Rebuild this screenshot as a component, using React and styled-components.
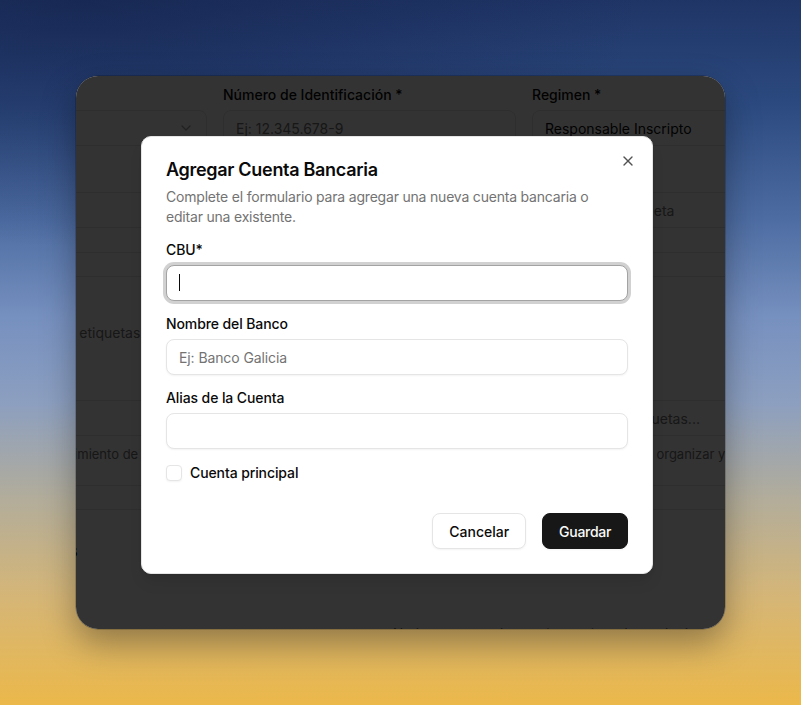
import React from "react";
import styled, { createGlobalStyle } from "styled-components";
import { X, ChevronDown } from "lucide-react";

const GlobalStyle = createGlobalStyle`
  * { box-sizing: border-box; }
  html, body { margin: 0; padding: 0; width: 801px; height: 705px; overflow: hidden; }
  body { font-family: Inter, "Noto Sans", sans-serif; -webkit-font-smoothing: antialiased; color: #0a0a0a; }
`;

const Desktop = styled.div`
  width: 801px;
  height: 705px;
  padding: 76px;
  display: flex;
  background:
    radial-gradient(ellipse 70% 35% at 10% 0%, rgba(18, 30, 70, 0.55), rgba(18, 30, 70, 0) 100%),
    linear-gradient(180deg, #1f3566 0%, #2c4a80 15%, #4d6ca2 31%, #7690bf 45%, #8c9fc0 57%, #b3ad9a 71%, #d6b676 85%, #ebb84a 100%);
`;

const AppWindow = styled.div`
  position: relative;
  flex: 1;
  border-radius: 22px;
  overflow: hidden;
  background: #ffffff;
  box-shadow: 0 14px 34px rgba(0, 0, 0, 0.35), 0 0 0 0.5px rgba(0, 0, 0, 0.35);
`;

/* ---------- background page (dimmed by overlay) ---------- */

const BgPage = styled.div`
  display: flex;
  flex-direction: column;
  margin-left: -162px;
  padding-top: 12px;
  font-size: 14px;
  color: #0a0a0a;
`;

const BgRow = styled.div`
  display: grid;
  grid-template-columns: repeat(3, 293px);
  column-gap: 16px;
  margin-top: ${(p) => p.$top || 0}px;
`;

const BgField = styled.div`
  display: grid;
  gap: 8px;
`;

const BgLabel = styled.div`
  font-weight: 500;
  line-height: 14px;
  height: 14px;
  white-space: nowrap;
`;

const BgInput = styled.div`
  height: 36px;
  border: 1px solid #e5e5e5;
  border-radius: 8px;
  padding: 0 12px;
  display: flex;
  align-items: center;
  justify-content: space-between;
  color: ${(p) => (p.$placeholder ? "#737373" : "#0a0a0a")};
  white-space: nowrap;
  overflow: hidden;
  svg { color: #a3a3a3; }
`;

const BgBar = styled.div`
  grid-column: 1 / -1;
  height: 25px;
  border-top: 1px solid #e5e5e5;
  border-bottom: 1px solid #e5e5e5;
`;

const BgText = styled.div`
  line-height: 20px;
  padding-left: 4px;
  color: #737373;
  white-space: nowrap;
`;

const BgHelper = styled.div`
  font-size: 13px;
  line-height: 18px;
  color: #737373;
  white-space: nowrap;
  overflow: hidden;
`;

const BgHeading = styled.div`
  font-size: 18px;
  line-height: 28px;
  font-weight: 600;
  white-space: nowrap;
`;

const BgEmpty = styled.div`
  grid-column: 2 / 4;
  text-align: center;
  color: #737373;
  line-height: 20px;
  padding-left: 40px;
  white-space: nowrap;
`;

/* ---------- dialog ---------- */

const Overlay = styled.div`
  position: absolute;
  inset: 0;
  background: rgba(0, 0, 0, 0.8);
  display: flex;
  align-items: flex-start;
  justify-content: flex-start;
  padding: 60px 0 0 65px;
`;

const Dialog = styled.div`
  position: relative;
  width: 512px;
  background: #ffffff;
  border: 1px solid #e5e5e5;
  border-radius: 10px;
  padding: 24px;
  display: grid;
  gap: 16px;
  box-shadow: 0 10px 15px -3px rgba(0, 0, 0, 0.1), 0 4px 6px -4px rgba(0, 0, 0, 0.1);
`;

const CloseButton = styled.button`
  position: absolute;
  top: 16px;
  right: 16px;
  width: 16px;
  height: 16px;
  padding: 0;
  border: 0;
  background: transparent;
  color: #0a0a0a;
  opacity: 0.7;
  display: flex;
  cursor: pointer;
`;

const Header = styled.div`
  display: flex;
  flex-direction: column;
  gap: 8px;
`;

const Title = styled.h2`
  margin: 0;
  font-size: 18px;
  line-height: 18px;
  font-weight: 600;
  letter-spacing: -0.3px;
`;

const Description = styled.p`
  margin: 0;
  font-size: 14px;
  line-height: 20px;
  color: #737373;
  letter-spacing: -0.2px;
`;

const Form = styled.div`
  display: grid;
  gap: 16px;
`;

const Field = styled.div`
  display: grid;
  gap: 8px;
`;

const Label = styled.label`
  font-size: 14px;
  line-height: 14px;
  font-weight: 500;
  letter-spacing: -0.1px;
`;

const Control = styled.div`
  position: relative;
`;

const Input = styled.input`
  display: block;
  width: 100%;
  height: 36px;
  padding: 0 12px;
  border-radius: 8px;
  border: 1px solid ${(p) => (p.$focused ? "#a3a3a3" : "#e5e5e5")};
  box-shadow: ${(p) =>
    p.$focused ? "0 0 0 3px rgba(163, 163, 163, 0.5)" : "0 1px 2px rgba(0, 0, 0, 0.05)"};
  font-family: inherit;
  font-size: 14px;
  letter-spacing: -0.1px;
  color: #0a0a0a;
  background: #ffffff;
  outline: none;
  caret-color: transparent;
  &::placeholder { color: #737373; }
`;

const Caret = styled.span`
  position: absolute;
  left: 13px;
  top: 9px;
  width: 1px;
  height: 17px;
  background: #0a0a0a;
`;

const CheckRow = styled.div`
  display: flex;
  align-items: center;
  gap: 8px;
  height: 16px;
`;

const CheckBox = styled.span`
  width: 16px;
  height: 16px;
  border: 1px solid #e5e5e5;
  border-radius: 4px;
  box-shadow: 0 1px 2px rgba(0, 0, 0, 0.05);
  background: #fff;
`;

const CheckLabel = styled.span`
  font-size: 14px;
  line-height: 14px;
  font-weight: 500;
  letter-spacing: -0.1px;
`;

const Footer = styled.div`
  display: flex;
  justify-content: flex-end;
  gap: 16px;
  margin-top: 16px;
`;

const Button = styled.button`
  height: 36px;
  padding: 0 16px;
  border-radius: 8px;
  font-family: inherit;
  font-size: 14px;
  font-weight: 500;
  letter-spacing: ${(p) => (p.$primary ? "-0.3px" : "0")};
  cursor: pointer;
  border: 1px solid ${(p) => (p.$primary ? "#171717" : "#e5e5e5")};
  background: ${(p) => (p.$primary ? "#171717" : "#ffffff")};
  color: ${(p) => (p.$primary ? "#fafafa" : "#0a0a0a")};
  box-shadow: 0 1px 2px rgba(0, 0, 0, 0.05);
`;

export default function App() {
  return (
    <>
      <GlobalStyle />
      <Desktop>
        <AppWindow>
          <BgPage>
            <BgRow>
              <BgField>
                <BgLabel>Tipo de Documento *</BgLabel>
                <BgInput>
                  <span>CUIT</span>
                  <ChevronDown size={16} />
                </BgInput>
              </BgField>
              <BgField>
                <BgLabel>Número de Identificación *</BgLabel>
                <BgInput $placeholder>Ej: 12.345.678-9</BgInput>
              </BgField>
              <BgField>
                <BgLabel>Regimen *</BgLabel>
                <BgInput>Responsable Inscripto</BgInput>
              </BgField>
            </BgRow>
            <BgRow $top={24}>
              <BgField>
                <BgLabel>Condición</BgLabel>
                <BgInput />
              </BgField>
              <BgField>
                <BgLabel>Email</BgLabel>
                <BgInput />
              </BgField>
              <BgField>
                <BgLabel>Etiqueta</BgLabel>
                <BgInput $placeholder>Escoja una etiqueta</BgInput>
              </BgField>
            </BgRow>
            <BgRow $top={24}>
              <BgBar />
            </BgRow>
            <BgRow $top={46}>
              <BgText>Organiza contactos con etiquetas</BgText>
            </BgRow>
            <BgRow $top={35}>
              <BgField>
                <BgLabel>Seguimiento</BgLabel>
                <BgInput />
              </BgField>
              <BgField>
                <BgLabel>Notas</BgLabel>
                <BgInput />
              </BgField>
              <BgField>
                <BgLabel>Etiquetas</BgLabel>
                <BgInput $placeholder>Seleccionar etiquetas...</BgInput>
              </BgField>
            </BgRow>
            <BgRow $top={9}>
              <BgHelper>Permite rehabilitar el seguimiento de pagos</BgHelper>
              <div />
              <BgHelper>Crea etiquetas para organizar y filtrar</BgHelper>
            </BgRow>
            <BgRow $top={22}>
              <BgBar />
            </BgRow>
            <BgRow $top={27}>
              <BgHeading>Cuentas Bancarias</BgHeading>
            </BgRow>
            <BgRow $top={59}>
              <BgEmpty>No hay cuentas bancarias registradas todavía</BgEmpty>
            </BgRow>
          </BgPage>

          <Overlay>
            <Dialog role="dialog" aria-labelledby="dlg-title">
              <Header>
                <Title id="dlg-title">Agregar Cuenta Bancaria</Title>
                <Description>
                  Complete el formulario para agregar una nueva cuenta bancaria o editar una existente.
                </Description>
              </Header>
              <Form>
                <Field>
                  <Label htmlFor="cbu">CBU*</Label>
                  <Control>
                    <Input id="cbu" $focused readOnly />
                    <Caret />
                  </Control>
                </Field>
                <Field>
                  <Label htmlFor="banco">Nombre del Banco</Label>
                  <Input id="banco" placeholder="Ej: Banco Galicia" readOnly />
                </Field>
                <Field>
                  <Label htmlFor="alias">Alias de la Cuenta</Label>
                  <Input id="alias" readOnly />
                </Field>
                <CheckRow>
                  <CheckBox role="checkbox" aria-checked="false" />
                  <CheckLabel>Cuenta principal</CheckLabel>
                </CheckRow>
              </Form>
              <Footer>
                <Button>Cancelar</Button>
                <Button $primary>Guardar</Button>
              </Footer>
              <CloseButton aria-label="Cerrar">
                <X size={16} />
              </CloseButton>
            </Dialog>
          </Overlay>
        </AppWindow>
      </Desktop>
    </>
  );
}
